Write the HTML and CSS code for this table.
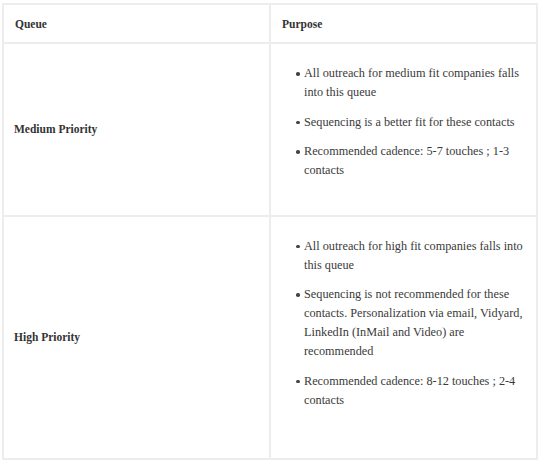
FILE: index.html
```html
<!DOCTYPE html>
<html>
<head>
<meta charset="utf-8">
<link rel="stylesheet" href="styles.css">
</head>
<body>
<table class="queue-table">
  <thead>
    <tr>
      <th class="head-cell">Queue</th>
      <th class="head-cell">Purpose</th>
    </tr>
  </thead>
  <tbody>
    <tr class="row-medium">
      <td class="label-cell">Medium Priority</td>
      <td class="list-cell">
        <ul class="points">
          <li>All outreach for medium fit companies falls into this queue</li>
          <li>Sequencing is a better fit for these contacts</li>
          <li>Recommended cadence: 5-7 touches ; 1-3 contacts</li>
        </ul>
      </td>
    </tr>
    <tr class="row-high">
      <td class="label-cell">High Priority</td>
      <td class="list-cell">
        <ul class="points">
          <li>All outreach for high fit companies falls into this queue</li>
          <li>Sequencing is not recommended for these contacts. Personalization via email, Vidyard, LinkedIn (InMail and Video) are recommended</li>
          <li>Recommended cadence: 8-12 touches ; 2-4 contacts</li>
        </ul>
      </td>
    </tr>
  </tbody>
</table>
</body>
</html>
```
FILE: styles.css
```css
html, body {
  margin: 0;
  padding: 0;
  background: #ffffff;
}
body {
  font-family: "Liberation Serif", "DejaVu Serif", serif;
  color: #3a3a3a;
  font-size: 12.25px;
}
.queue-table {
  margin: 3px 0 0 2px;
  width: 536px;
  border-collapse: collapse;
  table-layout: fixed;
  border: 2px solid #ededed;
}
.head-cell {
  text-align: left;
  font-weight: bold;
  font-size: 11.5px;
  color: #333;
  height: 37px;
  padding: 0 11px;
  border: 2px solid #ededed;
  vertical-align: middle;
}
.label-cell {
  font-weight: bold;
  font-size: 11.5px;
  color: #333;
  padding: 0 10px;
  border: 2px solid #ededed;
  vertical-align: middle;
}
.list-cell {
  border: 2px solid #ededed;
  padding: 20px 12px 24px 12px;
  vertical-align: top;
}
.row-high .list-cell {
  padding-bottom: 38px;
}
.points {
  margin: 0;
  padding: 0 0 0 21px;
  line-height: 19px;
  list-style: none;
}
.points li {
  position: relative;
  margin-bottom: 10.5px;
}
.points li::before {
  content: "";
  position: absolute;
  left: -8px;
  top: 8px;
  width: 3.5px;
  height: 3.5px;
  border-radius: 50%;
  background: #444;
}
```
